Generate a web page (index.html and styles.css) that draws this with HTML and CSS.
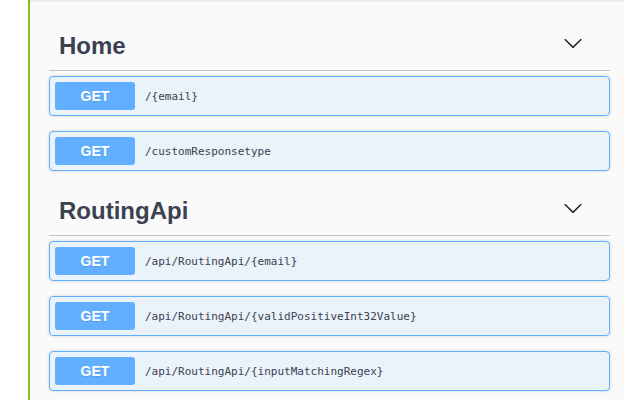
FILE: index.html
```html
<!DOCTYPE html>
<html>
<head>
<meta charset="utf-8">
<link rel="stylesheet" href="styles.css">
</head>
<body>
<div class="page">
  <div class="gutter"></div>
  <main class="main">
    <section class="tag-section">
      <h4 class="tag">
        <span class="tag-name">Home</span>
        <svg class="arrow" width="20" height="20" viewBox="0 0 20 20"><path d="M17.418 6.109c.272-.268.709-.268.979 0s.271.701 0 .969l-7.908 7.83c-.27.268-.707.268-.979 0l-7.908-7.83c-.27-.268-.27-.701 0-.969.271-.268.709-.268.979 0L10 13.25l7.418-7.141z"/></svg>
      </h4>
      <div class="opblock"><span class="method">GET</span><span class="path">/{email}</span></div>
      <div class="opblock"><span class="method">GET</span><span class="path">/customResponsetype</span></div>
    </section>
    <section class="tag-section">
      <h4 class="tag">
        <span class="tag-name">RoutingApi</span>
        <svg class="arrow" width="20" height="20" viewBox="0 0 20 20"><path d="M17.418 6.109c.272-.268.709-.268.979 0s.271.701 0 .969l-7.908 7.83c-.27.268-.707.268-.979 0l-7.908-7.83c-.27-.268-.27-.701 0-.969.271-.268.709-.268.979 0L10 13.25l7.418-7.141z"/></svg>
      </h4>
      <div class="opblock"><span class="method">GET</span><span class="path">/api/RoutingApi/{email}</span></div>
      <div class="opblock"><span class="method">GET</span><span class="path">/api/RoutingApi/{validPositiveInt32Value}</span></div>
      <div class="opblock"><span class="method">GET</span><span class="path">/api/RoutingApi/{inputMatchingRegex}</span></div>
    </section>
  </main>
</div>
</body>
</html>
```
FILE: styles.css
```css
html, body {
  margin: 0;
  padding: 0;
  background: #ffffff;
  overflow: hidden;
}
.page {
  display: flex;
  width: 624px;
  height: 400px;
  overflow: hidden;
}
.gutter {
  width: 28px;
  flex: none;
  background: #ffffff;
}
.main {
  flex: 1;
  border-left: 2px solid #84c41c;
  background: linear-gradient(#e2e2e2 0, #eeeeee 1px, #f6f6f6 2px, #fafafa 3px);
  background-color: #fafafa;
  padding: 21px 14px 0 19px;
  font-family: "Liberation Sans", Arial, sans-serif;
  color: #3b4151;
}
.tag {
  display: flex;
  align-items: center;
  justify-content: space-between;
  margin: 0 0 5px;
  padding: 10px 27px 10px 10px;
  border-bottom: 1px solid rgba(59, 65, 81, 0.3);
  font-size: 24px;
  font-weight: 700;
  line-height: 29px;
}
.arrow {
  display: block;
  fill: #222222;
  margin-bottom: 5px;
}
.opblock {
  display: flex;
  align-items: center;
  height: 38px;
  margin: 0 0 15px;
  padding: 0 5px;
  border: 1px solid #61affe;
  border-radius: 4px;
  background: rgba(97, 175, 254, 0.1);
  box-shadow: 0 0 3px rgba(0, 0, 0, 0.19);
}
.method {
  min-width: 80px;
  padding: 6px 0;
  border-radius: 3px;
  background: #61affe;
  color: #ffffff;
  font-size: 14px;
  font-weight: 700;
  line-height: 16px;
  text-align: center;
  text-shadow: 0 1px 0 rgba(0, 0, 0, 0.1);
}
.path {
  padding: 0 10px;
  font-family: "DejaVu Sans Mono", "Liberation Mono", monospace;
  font-size: 11px;
  color: #3b4151;
}
```
